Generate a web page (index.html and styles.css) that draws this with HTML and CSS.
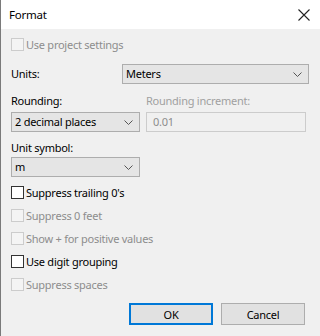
FILE: index.html
```html
<!DOCTYPE html>
<html>
<head>
<meta charset="utf-8">
<link rel="stylesheet" href="styles.css">
</head>
<body>
<div class="dialog">
  <div class="titlebar">
    <span class="title">Format</span>
    <svg class="close" width="12" height="12" viewBox="0 0 12 12"><path d="M0.5 0.5 L11.5 11.5 M11.5 0.5 L0.5 11.5" stroke="#222" stroke-width="1.1" fill="none"/></svg>
  </div>
  <div class="content">
    <div class="check disabled r1"><span class="box"></span><span>Use project settings</span></div>
    <div class="units-row">
      <span class="label">Units:</span>
      <div class="select wide"><span>Meters</span><svg class="chev" width="9" height="5" viewBox="0 0 9 5"><path d="M0.5 0.5 L4.5 4.5 L8.5 0.5" stroke="#555" fill="none"/></svg></div>
    </div>
    <div class="two-col">
      <div class="col left">
        <span class="label">Rounding:</span>
        <div class="select narrow"><span>2 decimal places</span><svg class="chev" width="9" height="5" viewBox="0 0 9 5"><path d="M0.5 0.5 L4.5 4.5 L8.5 0.5" stroke="#555" fill="none"/></svg></div>
      </div>
      <div class="col right">
        <span class="label disabled-text">Rounding increment:</span>
        <div class="textbox"><span>0.01</span></div>
      </div>
    </div>
    <div class="col sym">
      <span class="label">Unit symbol:</span>
      <div class="select narrow"><span>m</span><svg class="chev" width="9" height="5" viewBox="0 0 9 5"><path d="M0.5 0.5 L4.5 4.5 L8.5 0.5" stroke="#555" fill="none"/></svg></div>
    </div>
    <div class="checks">
      <div class="check"><span class="box"></span><span>Suppress trailing 0's</span></div>
      <div class="check disabled"><span class="box"></span><span>Suppress 0 feet</span></div>
      <div class="check disabled"><span class="box"></span><span>Show + for positive values</span></div>
      <div class="check"><span class="box"></span><span>Use digit grouping</span></div>
      <div class="check disabled"><span class="box"></span><span>Suppress spaces</span></div>
    </div>
    <div class="buttons">
      <button class="btn default">OK</button>
      <button class="btn">Cancel</button>
    </div>
  </div>
</div>
</body>
</html>
```
FILE: styles.css
```css
* { box-sizing: border-box; }
html, body { margin: 0; padding: 0; }
body {
  width: 320px;
  height: 336px;
  overflow: hidden;
  font-family: "Noto Sans", "Open Sans", sans-serif;
  font-size: 11px;
  letter-spacing: -0.25px;
  color: #000;
  background: #f0f0f0;
}
.dialog {
  width: 320px;
  height: 336px;
  border-left: 1px solid #7a7a7a;
  background: #f0f0f0;
}
.titlebar {
  height: 29px;
  background: #fff;
  display: flex;
  align-items: center;
  justify-content: space-between;
  padding: 0 10px 0 8px;
}
.title { font-size: 11.5px; line-height: 14px; }
.close { display: block; }
.content {
  padding-left: 10px;
  display: flex;
  flex-direction: column;
}
.check {
  height: 23px;
  display: flex;
  align-items: center;
  line-height: 14px;
}
.check.r1 { margin-top: 4px; }
.box {
  width: 13px;
  height: 13px;
  border: 1px solid #333;
  background: #fff;
  margin-right: 2px;
  flex: none;
}
.check.disabled { color: #8d8d8d; }
.check.disabled .box { border-color: #cccccc; background: #f4f4f4; }
.disabled-text { color: #a0a0a0; }
.label { line-height: 14px; display: block; }
.units-row {
  margin-top: 8px;
  display: flex;
  align-items: center;
  height: 20px;
}
.units-row .label { width: 111px; }
.select {
  height: 20px;
  border: 1px solid #adadad;
  background: #e5e5e5;
  display: flex;
  align-items: center;
  justify-content: space-between;
  padding: 0 6px 0 3px;
  line-height: 14px;
}
.select.wide { width: 187px; }
.select.narrow { width: 129px; }
.chev { display: block; }
.two-col {
  margin-top: 10px;
  display: flex;
  gap: 6px;
}
.col { display: flex; flex-direction: column; gap: 4px; }
.col.right .textbox { width: 160px; }
.textbox {
  height: 20px;
  border: 1px solid #cccccc;
  background: #f0f0f0;
  color: #8d8d8d;
  display: flex;
  align-items: center;
  padding: 0 6px;
  line-height: 14px;
}
.col.sym { margin-top: 9px; gap: 2px; }
.checks { margin-top: 4px; display: flex; flex-direction: column; }
.buttons {
  margin-top: 7px;
  display: flex;
  justify-content: flex-end;
  gap: 8px;
  padding-right: 15px;
}
.btn {
  width: 84px;
  height: 22px;
  border: 1px solid #adadad;
  background: #e1e1e1;
  font-family: inherit;
  font-size: 11px;
  letter-spacing: -0.25px;
  color: #000;
  padding: 0;
}
.btn.default { border: 2px solid #0078d7; }
```
